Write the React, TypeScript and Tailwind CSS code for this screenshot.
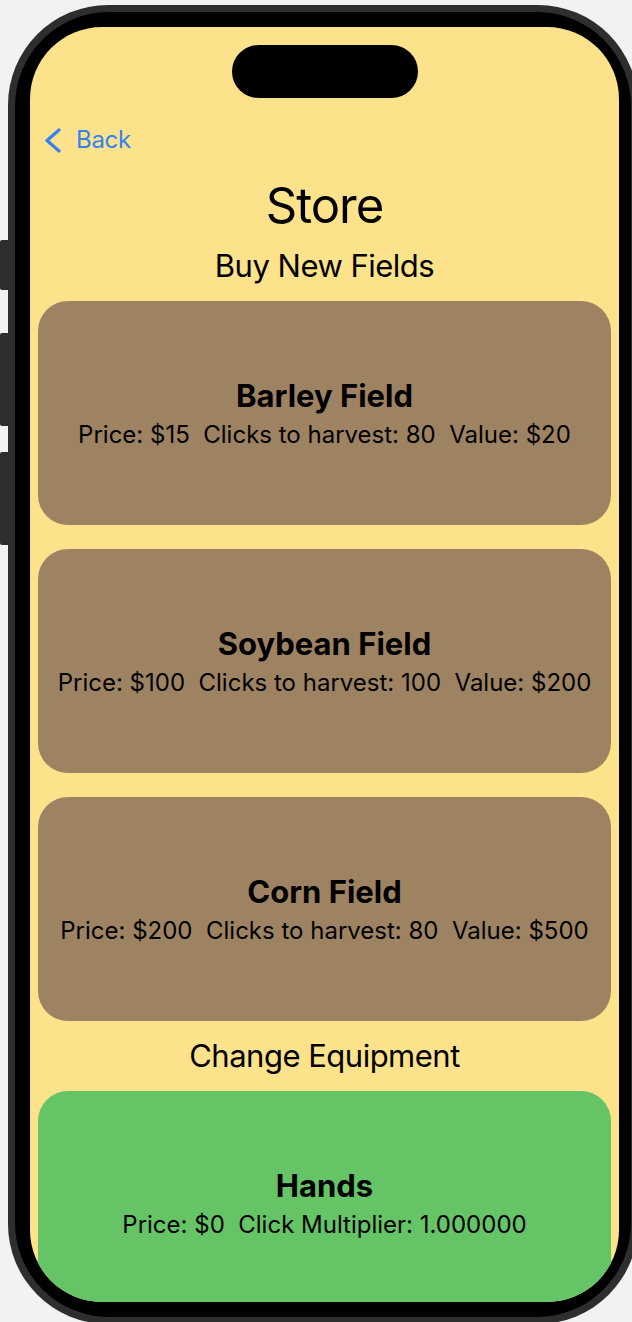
const fields = [
  { name: 'Barley Field', info: 'Price: $15  Clicks to harvest: 80  Value: $20' },
  { name: 'Soybean Field', info: 'Price: $100  Clicks to harvest: 100  Value: $200' },
  { name: 'Corn Field', info: 'Price: $200  Clicks to harvest: 80  Value: $500' },
];

function StoreCard({ name, info, color }: { name: string; info: string; color: string }) {
  return (
    <div className={`h-[224px] shrink-0 rounded-[30px] ${color} flex flex-col items-center justify-center text-black`}>
      <div className="text-[31px] leading-[38px] font-bold">{name}</div>
      <div className="mt-[5px] text-[24px] leading-[30px] whitespace-pre">{info}</div>
    </div>
  );
}

export default function App() {
  return (
    <div
      className="relative h-[1322px] w-[632px] overflow-hidden bg-[#f2f2f2]"
      style={{ fontFamily: 'Inter, "Noto Sans", sans-serif' }}
    >
      {/* side buttons */}
      <div className="absolute left-0 top-[240px] h-[50px] w-[8px] rounded-l-[2px] bg-[#2e2e2e]" />
      <div className="absolute left-0 top-[333px] h-[93px] w-[8px] rounded-l-[2px] bg-[#2e2e2e]" />
      <div className="absolute left-0 top-[452px] h-[93px] w-[8px] rounded-l-[2px] bg-[#2e2e2e]" />

      {/* phone body */}
      <div className="ml-[8px] mt-[5px] w-[630px] rounded-[100px] bg-[#2e2e2e] p-[7px]">
        <div className="rounded-[94px] bg-black pb-[15px] pl-[15px] pr-[10px] pt-[15px]">
          <div className="flex h-[1275px] w-[589px] flex-col overflow-hidden rounded-[72px] bg-[#fce28a]">
            <div className="mx-auto mt-[18px] h-[53px] w-[186px] shrink-0 rounded-full bg-black" />

            <div className="ml-[14px] mt-[26px] flex h-[32px] shrink-0 items-center gap-[14px] text-[#3583f0]">
              <svg width="18" height="25" viewBox="0 0 18 25" fill="none">
                <path d="M15 2 L3 12.5 L15 23" stroke="currentColor" strokeWidth="3.2" strokeLinecap="round" strokeLinejoin="round" />
              </svg>
              <span className="text-[24px] leading-[32px] tracking-[-0.3px]">Back</span>
            </div>

            <div className="mt-[19px] text-center text-[49px] leading-[61px] tracking-[-1px] text-black">Store</div>
            <div className="mt-[10px] text-center text-[31px] leading-[40px] tracking-[-0.5px] text-black">Buy New Fields</div>

            <div className="mt-[15px] flex flex-col gap-[24px] px-[8px]">
              {fields.map((f) => (
                <StoreCard key={f.name} name={f.name} info={f.info} color="bg-[#9e8363]" />
              ))}
            </div>

            <div className="mt-[15px] text-center text-[31px] leading-[40px] tracking-[-0.5px] text-black">Change Equipment</div>

            <div className="mt-[15px] flex flex-col px-[8px]">
              <StoreCard name="Hands" info="Price: $0  Click Multiplier: 1.000000" color="bg-[#64c466]" />
            </div>
          </div>
        </div>
      </div>
    </div>
  );
}
